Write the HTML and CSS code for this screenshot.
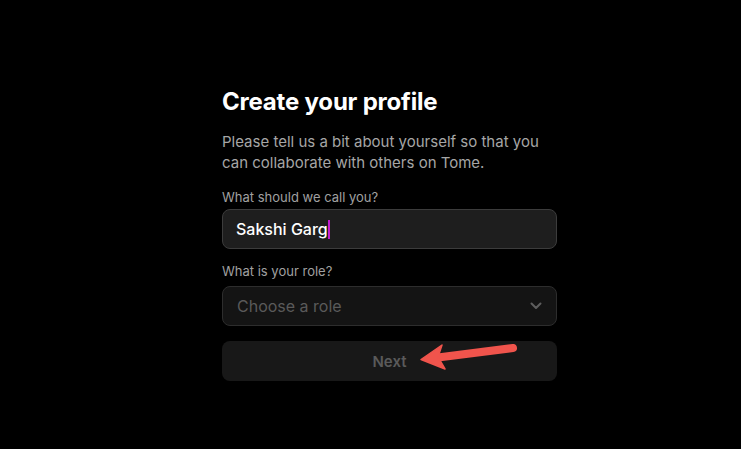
FILE: index.html
```html
<!DOCTYPE html>
<html>
<head>
<meta charset="utf-8">
<link rel="stylesheet" href="styles.css">
</head>
<body>
<main class="page">
  <section class="form">
    <h1 class="title">Create your profile</h1>
    <p class="intro">Please tell us a bit about yourself so that you can collaborate with others on Tome.</p>
    <label class="label">What should we call you?</label>
    <div class="field field-name"><span class="value">Sakshi Garg</span><span class="caret"></span></div>
    <label class="label label-role">What is your role?</label>
    <div class="field field-role">
      <span class="placeholder">Choose a role</span>
      <svg class="chevron" width="12" height="8" viewBox="0 0 12 8"><path d="M1.5 1.5 L6 6 L10.5 1.5" fill="none" stroke="#5e5e5e" stroke-width="2" stroke-linecap="round" stroke-linejoin="round"/></svg>
    </div>
    <div class="next-wrap">
      <button class="next">Next</button>
      <svg class="arrow" width="100" height="32" viewBox="0 0 100 32">
        <path d="M95 7 L20 16.5" stroke="#f0544c" stroke-width="8" stroke-linecap="round" fill="none"/>
        <path d="M3 18.5 L24 4 L20 16 L27 28 Z" fill="#f0544c" stroke="#f0544c" stroke-width="1.5" stroke-linejoin="round"/>
      </svg>
    </div>
  </section>
</main>
</body>
</html>
```
FILE: styles.css
```css
html, body {
  margin: 0;
  padding: 0;
  background: #000;
  height: 100%;
}
body {
  font-family: Inter, "Noto Sans", sans-serif;
  color: #fff;
}
.page {
  padding: 87px 0 0 222px;
}
.form {
  width: 335px;
  display: flex;
  flex-direction: column;
}
.title {
  margin: 0;
  font-size: 24px;
  font-weight: 700;
  line-height: 30px;
  letter-spacing: -0.2px;
}
.intro {
  margin: 14px 0 0;
  font-size: 15px;
  line-height: 21px;
  color: #a6a6a6;
}
.label {
  margin-top: 16px;
  font-size: 13px;
  line-height: 16px;
  color: #a0a0a0;
}
.label-role {
  margin-top: 14px;
}
.field {
  box-sizing: border-box;
  height: 40px;
  border-radius: 8px;
  display: flex;
  align-items: center;
  padding: 0 14px 0 13px;
  font-size: 16px;
}
.field-name {
  background: #1e1e1e;
  border: 1px solid #3c3c3c;
  margin-top: 4px;
}
.value {
  color: #fff;
  font-weight: 500;
}
.caret {
  width: 2px;
  height: 19px;
  background: #c21ad0;
}
.field-role {
  background: #141414;
  border: 1px solid #2d2d2d;
  justify-content: space-between;
  margin-top: 7px;
}
.placeholder {
  color: #5a5a5a;
  font-size: 16px;
  margin-left: 1px;
}
.next-wrap {
  position: relative;
  margin-top: 15px;
}
.next {
  display: block;
  width: 100%;
  height: 40px;
  border: none;
  border-radius: 8px;
  background: #181818;
  color: #5a5a5a;
  font-family: Inter, "Noto Sans", sans-serif;
  font-size: 15px;
  font-weight: 600;
}
.arrow {
  position: absolute;
  left: 196px;
  top: 0;
}
```
